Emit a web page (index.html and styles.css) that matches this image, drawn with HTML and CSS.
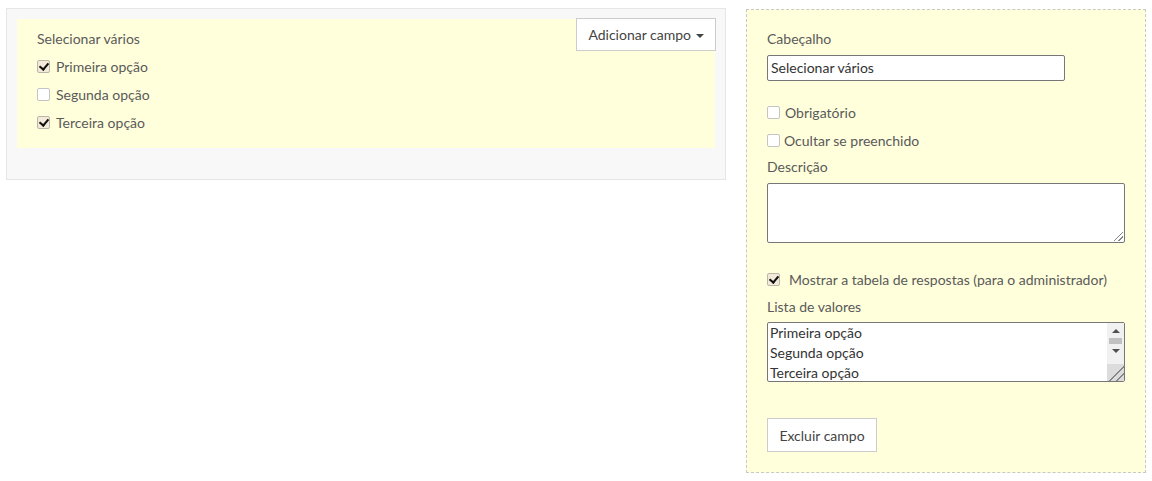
FILE: index.html
```html
<!DOCTYPE html>
<html lang="pt">
<head>
<meta charset="utf-8">
<link rel="stylesheet" href="styles.css">
</head>
<body>
<div class="page">
  <div class="preview">
    <div class="field">
      <button class="btn add">Adicionar campo <span class="caret"></span></button>
      <div class="field-title">Selecionar vários</div>
      <label class="opt"><span class="cb checked"></span>Primeira opção</label>
      <label class="opt"><span class="cb"></span>Segunda opção</label>
      <label class="opt"><span class="cb checked"></span>Terceira opção</label>
    </div>
  </div>
  <div class="editor">
    <div class="lbl first">Cabeçalho</div>
    <div class="input">Selecionar vários</div>
    <label class="chk req"><span class="cb"></span>Obrigatório</label>
    <label class="chk hide"><span class="cb"></span>Ocultar se preenchido</label>
    <div class="lbl desc">Descrição</div>
    <div class="textarea"><span class="grip"></span></div>
    <label class="chk show"><span class="cb checked"></span>Mostrar a tabela de respostas (para o administrador)</label>
    <div class="lbl list">Lista de valores</div>
    <div class="listbox">
      <div class="lines">
        <div>Primeira opção</div>
        <div>Segunda opção</div>
        <div>Terceira opção</div>
      </div>
      <div class="sbar">
        <span class="arr up"></span>
        <span class="thumb"></span>
        <span class="arr down"></span>
        <span class="corner"></span>
      </div>
    </div>
    <button class="btn del">Excluir campo</button>
  </div>
</div>
</body>
</html>
```
FILE: styles.css
```css
* { box-sizing: border-box; }
html, body { margin: 0; padding: 0; background: #fff; }
body {
  font-family: Lato, "Open Sans", "Liberation Sans", sans-serif;
  font-size: 14px;
  color: #5a5a5a;
}
.page {
  display: flex;
  align-items: flex-start;
  padding: 8px 0 0 6px;
  gap: 20px;
}
.preview {
  width: 720px;
  height: 172px;
  background: #f8f8f8;
  border: 1px solid #e6e6e6;
  padding: 10px 10px 0 10px;
}
.field {
  position: relative;
  background: #ffffdc;
  height: 129px;
  padding: 9px 20px 0 20px;
}
.btn {
  font-family: inherit;
  font-size: 14px;
  color: #444;
  background: #fff;
  border: 1px solid #ccc;
  border-radius: 0;
  padding: 0;
  cursor: pointer;
}
.add {
  position: absolute;
  right: -1px;
  top: -1px;
  width: 140px;
  height: 33px;
}
.caret {
  display: inline-block;
  width: 0; height: 0;
  border-left: 4px solid transparent;
  border-right: 4px solid transparent;
  border-top: 4px solid #444;
  vertical-align: middle;
  margin-left: 1px;
}
.field-title { height: 22px; line-height: 22px; margin-bottom: 2px; }
.opt {
  display: flex;
  align-items: center;
  height: 28px;
}
.cb {
  display: inline-block;
  width: 13px;
  height: 13px;
  border: 1px solid #c4c4c4;
  border-radius: 2px;
  background: #fff;
  margin-right: 6px;
  position: relative;
  flex: none;
}
.cb.checked { background: #f3ead9; border-color: #bdb5a8; }
.cb.checked::after {
  content: "";
  position: absolute;
  left: 3px;
  top: 0px;
  width: 4px;
  height: 7px;
  border-right: 2px solid #111;
  border-bottom: 2px solid #111;
  transform: rotate(40deg);
}
.editor {
  width: 400px;
  height: 464px;
  margin-top: 1px;
  background: #ffffdc;
  border: 1px dashed #c8c8c8;
  padding: 19px 20px 0 20px;
}
.lbl { height: 20px; line-height: 20px; }
.input {
  width: 298px;
  height: 26px;
  line-height: 24px;
  margin-top: 6px;
  border: 1px solid #777;
  border-radius: 2px;
  background: #fff;
  padding: 0 3px;
  color: #333;
}
.chk { display: flex; align-items: center; height: 28px; }
.req { margin-top: 17px; }
.req .cb { margin-right: 5px; }
.hide .cb { margin-right: 4px; }
.desc { margin-top: 3px; }
.textarea {
  position: relative;
  width: 358px;
  height: 60px;
  margin-top: 6px;
  border: 1px solid #777;
  border-radius: 2px;
  background: #fff;
}
.grip {
  position: absolute;
  right: 1px; bottom: 1px;
  width: 9px; height: 9px;
  background: linear-gradient(135deg, transparent 45%, #888 45%, #888 52%, transparent 52%, transparent 72%, #888 72%, #888 79%, transparent 79%);
}
.show { margin-top: 22px; }
.show .cb { margin-right: 9px; }
.list { margin-top: 4px; }
.listbox {
  display: flex;
  width: 358px;
  height: 60px;
  margin-top: 5px;
  border: 1px solid #777;
  border-radius: 2px;
  background: #fff;
  overflow: hidden;
}
.lines { flex: 1; padding: 0 2px; color: #333; line-height: 20px; }
.sbar {
  position: relative;
  width: 17px;
  background: #f1f1f1;
  display: flex;
  flex-direction: column;
  align-items: center;
}
.arr { width: 0; height: 0; border-left: 4px solid transparent; border-right: 4px solid transparent; }
.arr.up { border-bottom: 4px solid #505050; margin-top: 6px; }
.thumb { width: 13px; height: 6px; background: #c1c1c1; margin-top: 5px; }
.arr.down { border-top: 4px solid #505050; margin-top: 5px; }
.corner {
  position: absolute;
  left: 0; bottom: 0;
  width: 17px; height: 17px;
  background: #dcdcdc linear-gradient(135deg, transparent 55%, #888 55%, #888 60%, transparent 60%, transparent 76%, #888 76%, #888 81%, transparent 81%);
}
.del {
  margin-top: 36px;
  width: 110px;
  height: 34px;
}
```
